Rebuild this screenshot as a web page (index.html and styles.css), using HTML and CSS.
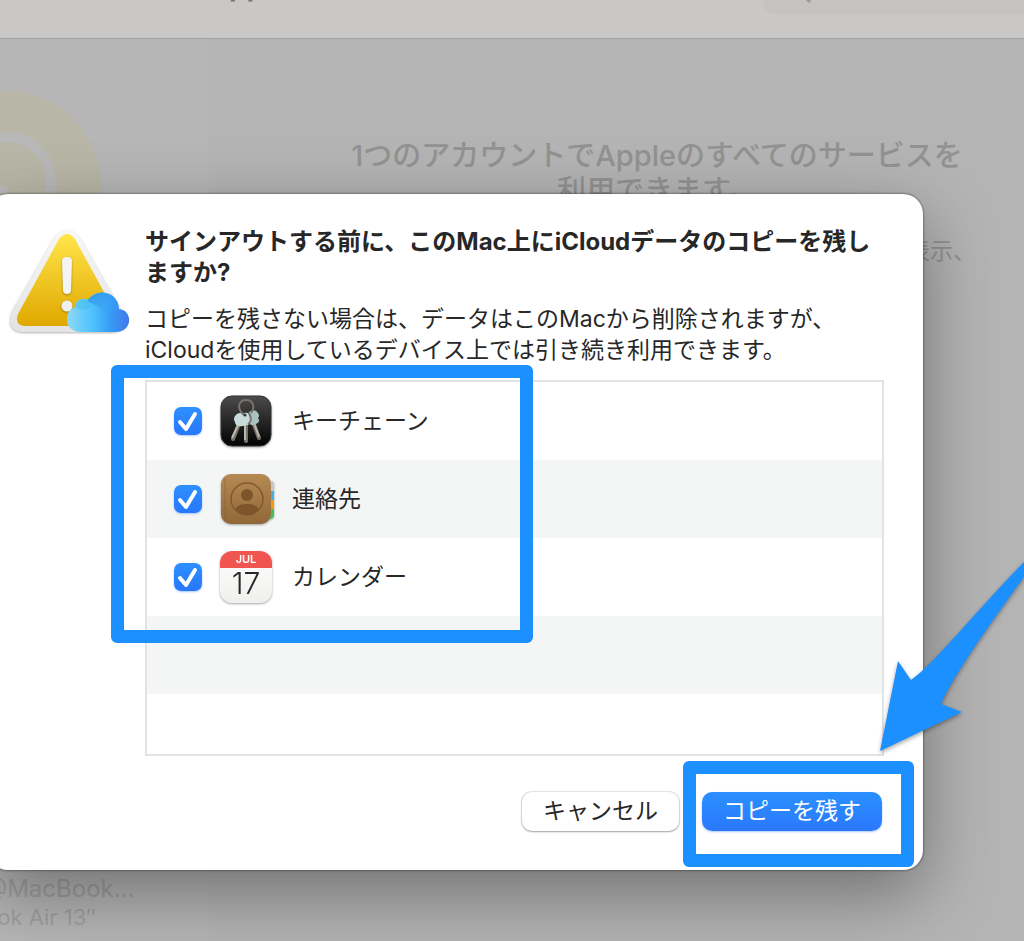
FILE: index.html
```html
<!DOCTYPE html>
<html lang="ja">
<head>
    <meta charset="UTF-8">
    <meta name="viewport" content="width=device-width, initial-scale=1.0">
    <title>Apple ID</title>
    <link rel="stylesheet" href="styles.css">
</head>
<body>
    <div id="window">
        <header id="toolbar">
            <h1>Apple ID</h1>
            <div class="search">
                <svg width="20" height="20" viewBox="0 0 20 20" aria-hidden="true"><circle cx="8" cy="8" r="6"/><path d="M12.500 12.500L18 18"/></svg>
                <input type="search" aria-label="検索">
            </div>
        </header>
        <div id="panes">
            <aside id="sidebar">
                <svg class="avatar" width="102" height="190" viewBox="0 0 102 190" aria-hidden="true">
                    <circle cx="6" cy="95" r="95" fill="#b8b6a6"/>
                    <circle cx="6" cy="91" r="45" fill="none" stroke="#b8b8b8" stroke-width="10"/>
                    <path d="M0 95h8v8H0z" fill="#b8b8b8"/>
                </svg>
                <div class="device">
                    <p class="name">@MacBook...</p>
                    <p class="model">ook Air 13″</p>
                </div>
            </aside>
            <main id="main">
                <h2>1つのアカウントでAppleのすべてのサービスを<br>利用できます。</h2>
                <p>表示、</p>
            </main>
        </div>
    </div>

    <div id="dialog" role="dialog" aria-labelledby="dialog-title">
        <svg class="warning" width="124" height="112" viewBox="0 0 124 112" aria-hidden="true">
            <defs>
                <linearGradient id="frame" x1="0" y1="0" x2="0" y2="1"><stop offset="0" stop-color="#f8f8f8"/><stop offset="1" stop-color="#e3e3e3"/></linearGradient>
                <linearGradient id="yellow" x1="0" y1="0" x2="0" y2="1"><stop offset="0" stop-color="#ffe54a"/><stop offset="1" stop-color="#e0a800"/></linearGradient>
                <linearGradient id="cloud" x1="0" y1="0.500" x2="1" y2="0.500"><stop offset="0" stop-color="#8ed8f5"/><stop offset="0.400" stop-color="#4fc3fd"/><stop offset="0.700" stop-color="#369cf4"/><stop offset="1" stop-color="#4078ee"/></linearGradient>
                <linearGradient id="puff" x1="0" y1="0" x2="1" y2="1"><stop offset="0" stop-color="#2f94ee"/><stop offset="1" stop-color="#3da9fa" stop-opacity="0"/></linearGradient>
            </defs>
            <path class="shade" d="M46 9Q59-7 72 9L114 82Q121 102 103 103H15Q-3 102 4 82z" fill="url(#frame)"/>
            <path d="M51 10Q59 0 67 10L108 85Q112 96 102 97H17Q6 96 10 85z" fill="url(#yellow)"/>
            <path class="shade" d="M54 32Q54 28 59 28Q64 28 64 32L63 61Q63 65 59 65Q55 65 55 61z" fill="#f4f4f4"/>
            <circle class="shade" cx="59" cy="77" r="5.500" fill="#f0f0f0"/>
            <path d="M73 103C64 103 59 97 59 91C59 84 62 80 67 78C67 70 76 68 80 71C90 57 111 64 111 80C125 81 125 103 108 103z" fill="url(#cloud)"/>
            <path d="M79 72C89 58 111 63 111 80C104 81 101 84 100 89C95 78 90 78 79 72z" fill="url(#puff)"/>
            <path d="M67 78C69 69 79 68 84 77C80 81 74 83 67 78z" fill="#3fbce8" opacity=".45"/>
        </svg>

        <div class="content">
            <h2 id="dialog-title">サインアウトする前に、このMac上にiCloudデータのコピーを残し<br>ますか?</h2>
            <p class="message">コピーを残さない場合は、データはこのMacから削除されますが、<br>iCloudを使用しているデバイス上では引き続き利用できます。</p>

            <div class="list-box">
                <ul class="list">
                    <li>
                        <label>
                            <span class="check"><input type="checkbox" checked><svg width="28" height="28" viewBox="0 0 28 28" aria-hidden="true"><path d="M6 15l6 7 9-15"/></svg></span>
                            <svg class="icon" width="54" height="52" viewBox="0 0 54 52" aria-hidden="true">
                                <defs><linearGradient id="dark" x1="0" y1="0" x2="0" y2="1"><stop offset="0" stop-color="#4b4b4b"/><stop offset="1" stop-color="#020202"/></linearGradient></defs>
                                <rect x="1" y="1" width="50" height="50" rx="11" fill="url(#dark)" stroke="#333"/>
                                <path d="M19 29L13 44M33 27L39 43M26 28V46" stroke="#77736b" stroke-width="4" stroke-linecap="round"/>
                                <path d="M18 30L12 43M34 28L39 42M25 29V45" stroke="#bdb9b0" stroke-width="2"/>
                                <path d="M29 17q6-4 9 1q2 3 0 5q3 4-2 6q-5 3-9-2z" fill="#aac1c1"/>
                                <path d="M15 21q3-4 9-3q6-1 7 5q1 6-4 7l-4 1q-8 1-8-4q-2-3 0-6z" fill="#c8dcdc"/>
                                <path d="M24 20C15 12 20 5 26 5C34 5 35 13 31 18M29 18q4 8-1 11" fill="none" stroke="#77736b" stroke-width="2"/>
                                <circle cx="25" cy="20" r="1.500" fill="#333"/>
                            </svg>
                            キーチェーン
                        </label>
                    </li>
                    <li>
                        <label>
                            <span class="check"><input type="checkbox" checked><svg width="28" height="28" viewBox="0 0 28 28" aria-hidden="true"><path d="M6 15l6 7 9-15"/></svg></span>
                            <svg class="icon" width="54" height="52" viewBox="0 0 54 52" aria-hidden="true">
                                <defs><linearGradient id="leather" x1="0" y1="0" x2="0" y2="1"><stop offset="0" stop-color="#b58a54"/><stop offset="1" stop-color="#916738"/></linearGradient></defs>
                                <path d="M46 8h5q3 0 3 4v6h-8z" fill="#c9c7c2"/>
                                <path d="M46 18h8v9h-8z" fill="#43afe4"/>
                                <path d="M46 27h8v9h-8z" fill="#f39a14"/>
                                <path d="M46 36h8v6q0 4-5 4h-3z" fill="#45c05c"/>
                                <rect x="1" y="1" width="50" height="50" rx="10" fill="url(#leather)"/>
                                <path d="M5 5v42" stroke="#7d5728" opacity=".2" stroke-width="2"/>
                                <circle cx="27" cy="26" r="16" fill="none" stroke="#82592d" stroke-width="1.500"/>
                                <circle cx="27" cy="22" r="6" fill="#7e552b"/>
                                <path d="M15 36q3-5 12-5t12 5q-5 6-12 6t-12-6z" fill="#7e552b"/>
                            </svg>
                            連絡先
                        </label>
                    </li>
                    <li>
                        <label>
                            <span class="check"><input type="checkbox" checked><svg width="28" height="28" viewBox="0 0 28 28" aria-hidden="true"><path d="M6 15l6 7 9-15"/></svg></span>
                            <span class="icon calendar"><span class="month">JUL</span><span class="day">17</span></span>
                            カレンダー
                        </label>
                    </li>
                    <li></li>
                    <li class="rest"></li>
                </ul>
                <div class="highlight"></div>
            </div>

            <div class="buttons">
                <button type="button">キャンセル</button>
                <div class="keep">
                    <button type="button" class="primary">コピーを残す</button>
                    <div class="highlight"></div>
                    <svg class="arrow" width="144" height="200" viewBox="0 0 144 200" aria-hidden="true"><path d="M0 190L18 100L31 119C54 103 94 52 144 1V16C109 64 73 115 61 143L82 151z"/></svg>
                </div>
            </div>
        </div>
    </div>
</body>
</html>
```

FILE: styles.css
```css
*{
    margin: 0;
    padding: 0;
    box-sizing: border-box;
}
body{
    font-family: Inter, "Noto Sans CJK JP", sans-serif;
    font-size: 23px;
    line-height: 31px;
    color: #272727;
    overflow: hidden;
}
ul{
    list-style: none;
}
svg{
    display: block;
    flex: none;
}

/* 後ろのウインドウ */
#window{
    display: flex;
    flex-direction: column;
    height: 100vh;
    min-height: 900px;
    overflow: hidden;
    background: #b4b4b4;
}
#toolbar{
    display: flex;
    justify-content: space-between;
    align-items: flex-start;
    flex: none;
    height: 39px;
    padding-left: 208px;
    background: #c9c8c6;
    border-bottom: 1px solid #a2a2a2;
}
#toolbar h1{
    margin-top: -28px;
    font-size: 28px;
    line-height: 28px;
    color: #777777;
}
.search{
    display: flex;
    width: 260px;
    height: 40px;
    margin-top: -26px;
    padding: 10px 0 0 28px;
    border-radius: 10px 0 0 10px;
    background: #c4c3c0;
}
.search svg{
    fill: none;
    stroke: #999999;
    stroke-width: 3;
}
.search input{
    width: 100%;
    height: 20px;
    border: 0;
    background: transparent;
}
#panes{
    display: flex;
    flex: 1;
}
#sidebar{
    display: flex;
    flex-direction: column;
    justify-content: space-between;
    width: 209px;
    padding: 52px 0 10px;
    background: #b6b6b6;
}
.device{
    margin-left: -16px;
    line-height: 28px;
    color: #a0a0a0;
}
.device .name{
    font-size: 24px;
}
.device .model{
    font-size: 22px;
}
#main{
    flex: 1;
    padding: 99px 60px 0 141px;
    color: #929292;
}
#main h2{
    display: flex;
    justify-content: center;
    font-size: 29px;
    line-height: 35px;
    font-weight: 500;
    text-align: center;
    white-space: nowrap;
}
#main p{
    margin-top: 28px;
    margin-right: -12px;
    text-align: right;
}

/* ダイアログ */
#dialog{
    position: absolute;
    top: 194px;
    left: -12px;
    right: 101px;
    display: flex;
    gap: 13px;
    padding: 32px 39px 39px 20px;
    border-radius: 20px;
    background: #ffffff;
    box-shadow: 0 0 2px 1px rgba(0,0,0,0.3), 0 24px 70px rgba(0,0,0,0.38);
}
.warning{
    margin-top: 3px;
}
.shade{
    filter: drop-shadow(0 1px 1px rgba(0,0,0,0.3));
}
.content{
    flex: 1;
    min-width: 0;
}
.content h2{
    font-size: 24px;
    line-height: 31px;
    font-weight: 700;
}
.message{
    margin-top: 16px;
}
.list-box{
    position: relative;
    margin-top: 14px;
}
.list{
    border: 2px solid #e3e3e3;
}
.list li{
    height: 78px;
}
.list li:nth-child(even){
    background: #f4f5f5;
}
.list .rest{
    height: 60px;
}
.list label{
    display: flex;
    align-items: center;
    height: 100%;
    padding-left: 27px;
}
.check{
    display: grid;
    margin-right: 18px;
}
.check input,
.check svg{
    grid-area: 1 / 1;
}
.check input{
    appearance: none;
    width: 28px;
    height: 28px;
    border-radius: 7px;
    background: linear-gradient(#2e90ff, #2877fb);
    box-shadow: 0 1px 2px rgba(40,120,255,0.4);
}
.check svg{
    fill: none;
    stroke: #ffffff;
    stroke-width: 4;
    stroke-linecap: round;
    stroke-linejoin: round;
    pointer-events: none;
}
.icon{
    margin-right: 18px;
    filter: drop-shadow(0 1px 1px rgba(0,0,0,0.35));
}
.calendar{
    display: flex;
    flex-direction: column;
    width: 52px;
    height: 52px;
    margin-right: 20px;
    overflow: hidden;
    border-radius: 12px;
    background: linear-gradient(#ffffff, #f0efed);
    text-align: center;
}
.month{
    background: #f0554f;
    color: #ffffff;
    font-size: 11px;
    line-height: 17px;
    font-weight: 600;
}
.day{
    font-size: 30px;
    line-height: 31px;
    font-weight: 300;
}

/* 青い枠と矢印 */
.highlight{
    position: absolute;
    border: 13px solid #1c90ff;
    border-radius: 6px;
    pointer-events: none;
}
.list-box .highlight{
    top: -15px;
    left: -34px;
    width: 422px;
    height: 278px;
}
.keep .highlight{
    top: -31px;
    right: -32px;
    bottom: -36px;
    left: -19px;
}
.arrow{
    position: absolute;
    right: -142px;
    bottom: 70px;
    fill: #1c90ff;
    filter: drop-shadow(0 2px 2px rgba(0,0,0,0.35));
    pointer-events: none;
}

.buttons{
    display: flex;
    justify-content: flex-end;
    gap: 23px;
    margin-top: 36px;
    padding-right: 2px;
}
.keep{
    position: relative;
}
button{
    display: block;
    height: 39px;
    padding: 0 21px;
    border: 0;
    border-radius: 10px;
    background: #ffffff;
    box-shadow: 0 0 1px 1px rgba(0,0,0,0.1), 0 1px 2px rgba(0,0,0,0.3);
    font: inherit;
    color: #272727;
}
.primary{
    background: linear-gradient(#2b90ff, #2b78fd);
    box-shadow: 0 1px 2px rgba(40,120,255,0.4);
    color: #ffffff;
}
```
